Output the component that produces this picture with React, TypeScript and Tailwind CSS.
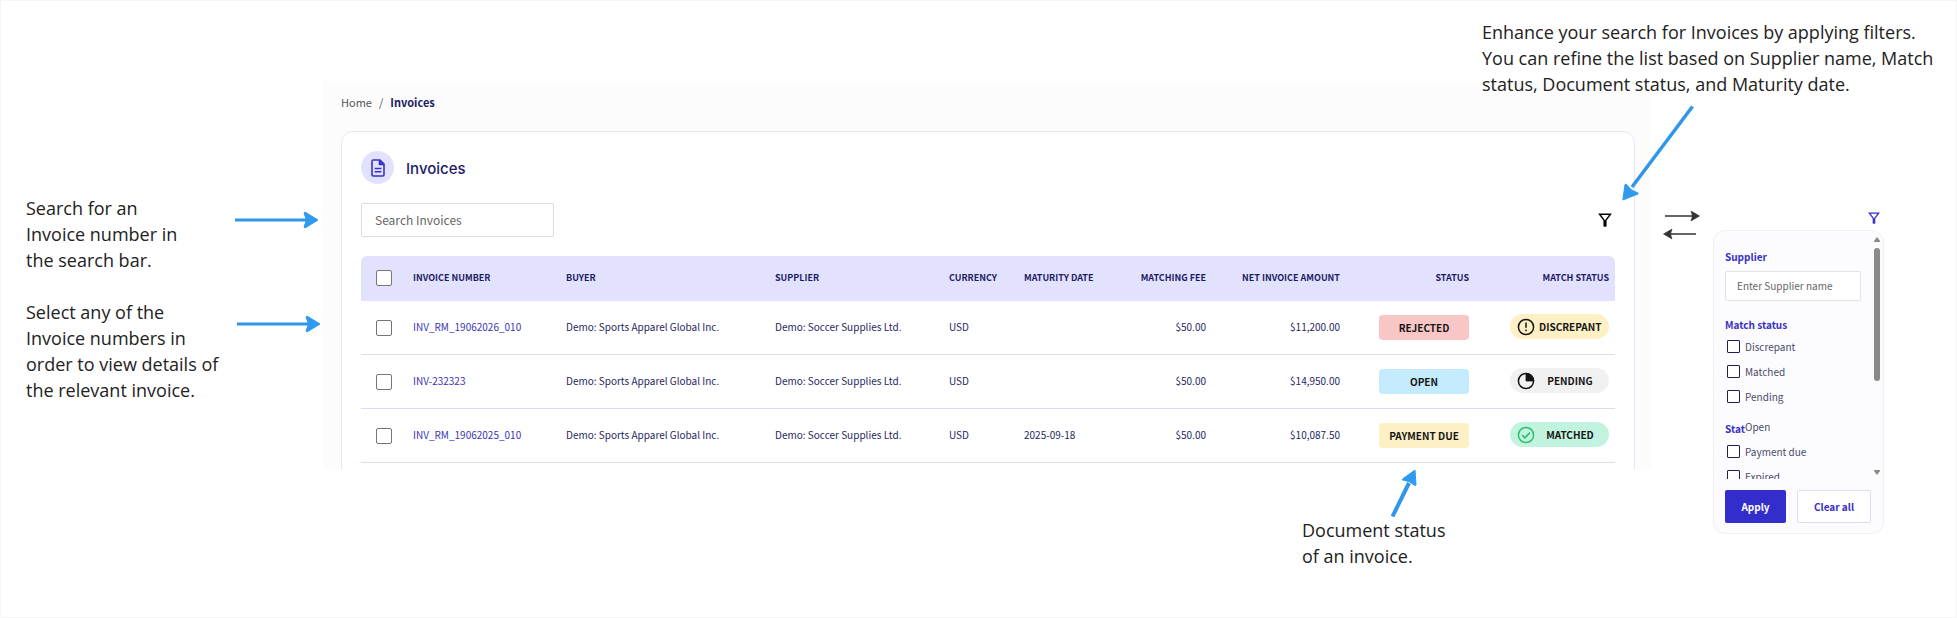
import type { ReactNode } from 'react'
import clsx from 'clsx'

type MatchStatus = 'DISCREPANT' | 'PENDING' | 'MATCHED'

interface Invoice {
  number: string
  buyer: string
  supplier: string
  currency: string
  maturityDate: string
  fee: string
  amount: string
  status: string
  statusClass: string
  match: MatchStatus
}

const invoices: Invoice[] = [
  {
    number: 'INV_RM_19062026_010',
    buyer: 'Demo: Sports Apparel Global Inc.',
    supplier: 'Demo: Soccer Supplies Ltd.',
    currency: 'USD',
    maturityDate: '',
    fee: '$50.00',
    amount: '$11,200.00',
    status: 'REJECTED',
    statusClass: 'bg-[#f9c6c6]',
    match: 'DISCREPANT',
  },
  {
    number: 'INV-232323',
    buyer: 'Demo: Sports Apparel Global Inc.',
    supplier: 'Demo: Soccer Supplies Ltd.',
    currency: 'USD',
    maturityDate: '',
    fee: '$50.00',
    amount: '$14,950.00',
    status: 'OPEN',
    statusClass: 'bg-[#c3eafd]',
    match: 'PENDING',
  },
  {
    number: 'INV_RM_19062025_010',
    buyer: 'Demo: Sports Apparel Global Inc.',
    supplier: 'Demo: Soccer Supplies Ltd.',
    currency: 'USD',
    maturityDate: '2025-09-18',
    fee: '$50.00',
    amount: '$10,087.50',
    status: 'PAYMENT DUE',
    statusClass: 'bg-[#fdf0c4]',
    match: 'MATCHED',
  },
]

const matchClass: Record<MatchStatus, string> = {
  DISCREPANT: 'bg-[#fdf0c4]',
  PENDING: 'bg-[#f1f1f1]',
  MATCHED: 'bg-[#c2f3df]',
}

function MatchIcon({ match }: { match: MatchStatus }) {
  const color = match === 'MATCHED' ? '#2fbf71' : '#151515'
  return (
    <svg width="18" height="18" viewBox="0 0 18 18" fill="none" stroke={color} className="shrink-0">
      <circle cx="9" cy="9" r="7.6" strokeWidth="1.5" />
      {match === 'DISCREPANT' && <path d="M9 4.6v5.2M9 11.6v1.7" strokeWidth="1.5" />}
      {match === 'PENDING' && <path d="M9 1.4A7.6 7.6 0 0 1 16.6 9H9z" fill={color} strokeWidth="0.8" />}
      {match === 'MATCHED' && <path d="M5.2 9.2l2.7 2.6 5-5.2" strokeWidth="1.6" />}
    </svg>
  )
}

function FunnelIcon({ size }: { size: number }) {
  return (
    <svg width={size} height={size} viewBox="0 0 14 14" fill="none" stroke="currentColor">
      <path d="M1.600 1.300h10.800L7.800 7.400v5.400H6.200V7.400z" strokeWidth="1.500" />
      <path d="M7 7.400v6" strokeWidth="2" />
    </svg>
  )
}

function RightArrow() {
  return (
    <svg width="84" height="18" viewBox="0 0 84 18" className="shrink-0">
      <path d="M0 9h72" stroke="#2f96ea" strokeWidth="3" />
      <path d="M83 9L70 17l-1-1 2.500-7L69 2l1-1z" fill="#2f9bf0" stroke="#2f9bf0" strokeLinejoin="round" />
    </svg>
  )
}

function Note({ children, className }: { children: ReactNode; className?: string }) {
  return (
    <p className={clsx("font-['Open_Sans',sans-serif] text-lg leading-[26px] whitespace-nowrap text-[#222]", className)}>
      {children}
    </p>
  )
}

function RowCheckbox({ label }: { label: string }) {
  return (
    <input
      type="checkbox"
      aria-label={label}
      className="ml-[15px] block size-4 appearance-none rounded-xs border border-[#767676] bg-white"
    />
  )
}

function InvoiceTable() {
  return (
    <table className="w-full table-fixed border-separate border-spacing-0 text-left text-[10px] text-[#27275f]">
      <colgroup>
        <col className="w-[52px]" />
        <col className="w-[153px]" />
        <col className="w-[209px]" />
        <col className="w-[174px]" />
        <col className="w-[75px]" />
        <col className="w-[100px]" />
        <col className="w-[82px]" />
        <col className="w-[134px]" />
        <col className="w-[129px]" />
        <col className="w-[146px]" />
      </colgroup>
      <thead>
        <tr className="h-[45px] whitespace-nowrap text-[9px] text-[#1d1b66] [&>th]:bg-[#e3e2fe] [&>th]:pb-px [&>th]:font-bold">
          <th className="rounded-tl-md">
            <RowCheckbox label="Select all invoices" />
          </th>
          <th>INVOICE NUMBER</th>
          <th>BUYER</th>
          <th>SUPPLIER</th>
          <th>CURRENCY</th>
          <th>MATURITY DATE</th>
          <th className="text-right">MATCHING FEE</th>
          <th className="text-right">NET INVOICE AMOUNT</th>
          <th className="text-right">STATUS</th>
          <th className="rounded-tr-md pr-1.5 text-right">MATCH STATUS</th>
        </tr>
      </thead>
      <tbody>
        {invoices.map((invoice) => (
          <tr key={invoice.number} className="h-[54px] whitespace-nowrap [&>td]:border-b [&>td]:border-[#dcdcf4]">
            <td>
              <RowCheckbox label={`Select ${invoice.number}`} />
            </td>
            <td className="pb-0.5">
              <a href="#invoice" className="text-[#3a35b8]">{invoice.number}</a>
            </td>
            <td className="pb-0.5">{invoice.buyer}</td>
            <td className="pb-0.5">{invoice.supplier}</td>
            <td className="pb-0.5">{invoice.currency}</td>
            <td className="pb-0.5">{invoice.maturityDate}</td>
            <td className="pb-0.5 text-right">{invoice.fee}</td>
            <td className="pb-0.5 text-right">{invoice.amount}</td>
            <td>
              <span
                className={clsx(
                  'ml-auto flex h-[25px] w-[90px] items-center justify-center rounded font-bold text-[#151515]',
                  invoice.statusClass,
                )}
              >
                {invoice.status}
              </span>
            </td>
            <td className="pr-1.5 pb-0.5">
              <span
                className={clsx(
                  'ml-auto flex h-[25px] w-[99px] items-center rounded-full pr-2 pl-[7px] font-bold text-[#151515]',
                  matchClass[invoice.match],
                )}
              >
                <MatchIcon match={invoice.match} />
                <span className="flex-1 pl-1 text-center">{invoice.match}</span>
              </span>
            </td>
          </tr>
        ))}
      </tbody>
    </table>
  )
}

function InvoicesPage() {
  return (
    <section className="h-[388px] overflow-hidden bg-[#fcfcfc] pr-4 pl-[18px] font-['Noto_Sans_CJK_SC',sans-serif]">
      <nav aria-label="Breadcrumb" className="flex h-[50px] items-center gap-[7px] pb-2 text-[11px] text-[#555]">
        <a href="#home">Home</a>
        <span>/</span>
        <span className="font-bold text-[#1d1b66]">Invoices</span>
      </nav>
      <div className="h-full rounded-t-xl border border-[#e6e6fa] bg-white pt-[19px] pr-[21px] pl-[19px]">
        <div className="flex items-center gap-3">
          <span className="flex size-[33px] items-center justify-center rounded-full bg-[#e3e2fe]">
            <svg width="14" height="18" viewBox="0 0 14 18" fill="none" stroke="#3a32c8" strokeWidth="1.6">
              <path d="M1 2.200Q1 1 2.200 1H9l4 4v10.800Q13 17 11.800 17H2.200Q1 17 1 15.800z" />
              <path d="M8.500 1v4.500H13" fill="#3a32c8" />
              <path d="M3.600 9.500h6.800M3.600 12.800h6.800" strokeWidth="1.4" />
            </svg>
          </span>
          <h1 className="pt-1 font-[Inter,sans-serif] text-[15px] font-medium text-[#1d1b66]">Invoices</h1>
        </div>
        <div className="mt-[19px] mb-[19px] flex items-center justify-between">
          <input
            type="text"
            aria-label="Search invoices"
            placeholder="Search Invoices"
            className="h-[34px] w-[193px] rounded-xs border border-[#dcdcdc] bg-white px-[13px] pb-0.5 text-xs placeholder:text-[#666]"
          />
          <button type="button" aria-label="Filter invoices" className="mr-px text-black">
            <FunnelIcon size={14} />
          </button>
        </div>
        <InvoiceTable />
      </div>
    </section>
  )
}

function FilterOption({ label }: { label: string }) {
  return (
    <label className="flex h-[25px] items-center gap-[5px] pl-0.5 text-[#4b4a68]">
      <input type="checkbox" className="size-[13px] appearance-none rounded-[1px] border border-[#241a5e] bg-white" />
      {label}
    </label>
  )
}

function FilterPanel() {
  return (
    <form className="h-[304px] w-[171px] rounded-xl border border-[#f0f0f3] bg-[#fcfcfe] pl-[11px] font-['Noto_Sans_CJK_SC',sans-serif] text-[10px]">
      <div className="flex h-[248px]">
        <div className="w-[136px] overflow-hidden pt-[18px]">
          <label htmlFor="supplier" className="block leading-4 font-bold text-[#3730c4]">
            Supplier
          </label>
          <input
            id="supplier"
            type="text"
            placeholder="Enter Supplier name"
            className="mt-1.5 h-[30px] w-full rounded-xs border border-[#e2e2e4] bg-white px-[11px] pb-0.5 placeholder:text-[#666]"
          />
          <fieldset className="mt-4">
            <legend className="pb-px leading-4 font-bold text-[#3730c4]">Match status</legend>
            <FilterOption label="Discrepant" />
            <FilterOption label="Matched" />
            <FilterOption label="Pending" />
          </fieldset>
          <fieldset className="mt-2">
            <legend className="mb-1 flex h-[18px] items-center text-[#4b4a68]">
              <span className="w-5 pt-1 font-bold text-[#3730c4]">Stat</span>
              Open
            </legend>
            <FilterOption label="Payment due" />
            <FilterOption label="Expired" />
          </fieldset>
        </div>
        <div className="ml-3 flex w-2 flex-col items-center pt-1.5 pb-1">
          <svg width="6" height="5" viewBox="0 0 6 5" fill="#8a8a8a">
            <path d="M3 0l3 4v1H0V4z" />
          </svg>
          <span className="mt-1.5 h-[133px] w-1.5 rounded-full bg-[#8a8a8a]" />
          <svg width="6" height="5" viewBox="0 0 6 5" fill="#8a8a8a" className="mt-auto">
            <path d="M0 0h6v1L3 5 0 1z" />
          </svg>
        </div>
      </div>
      <div className="mt-[11px] flex gap-[11px] font-bold">
        <button type="button" className="h-[33px] w-[61px] rounded-xs bg-[#322dcb] text-white">
          Apply
        </button>
        <button type="button" className="h-[33px] w-[74px] rounded-xs border border-[#dedcf8] bg-white text-[#3730c4]">
          Clear all
        </button>
      </div>
    </form>
  )
}

export default function App() {
  return (
    <main className="relative flex min-h-screen border border-[#f5f5f5] bg-white">
      <aside className="flex w-[322px] shrink-0 flex-col gap-[26px] pt-[194px] pl-[25px]">
        <div className="flex items-start">
          <Note className="w-[209px]">
            Search for an
            <br />
            Invoice number in
            <br />
            the search bar.
          </Note>
          <div className="pt-4">
            <RightArrow />
          </div>
        </div>
        <div className="flex items-start">
          <Note className="w-[211px]">
            Select any of the
            <br />
            Invoice numbers in
            <br />
            order to view details of
            <br />
            the relevant invoice.
          </Note>
          <div className="pt-4">
            <RightArrow />
          </div>
        </div>
      </aside>

      <div className="flex min-w-0 flex-1 flex-col pt-20">
        <InvoicesPage />
        <div className="w-[349px] self-end">
          <svg width="26" height="48" viewBox="0 0 26 48" className="ml-[89px]">
            <path d="M1.500 47.500L18 14" stroke="#2f96ea" strokeWidth="4" />
            <path d="M24 1l1 15-1 .5-6-4-6.500-1.500v-1z" fill="#2f9bf0" stroke="#2f9bf0" strokeLinejoin="round" />
          </svg>
          <Note>
            Document status
            <br />
            of an invoice.
          </Note>
        </div>
      </div>

      <aside className="flex w-[305px] shrink-0 items-start gap-3 pt-[210px] pl-3">
        <svg width="38" height="30" viewBox="0 0 38 30" fill="#333" stroke="#333">
          <path d="M2 5h28M6 23h27" strokeWidth="1.500" />
          <path d="M36.500 5L28 10l1.500-5L28 0zM.5 23L9 18l-1.500 5L9 28z" strokeWidth="0.600" />
        </svg>
        <div className="flex flex-col items-end gap-1.5">
          <button type="button" aria-label="Toggle filters" className="mr-1 h-[13px] text-[#3730c4]">
            <FunnelIcon size={12} />
          </button>
          <FilterPanel />
        </div>
      </aside>

      {/* Callout that lies over the page's top right corner */}
      <div className="absolute top-[18px] right-0 w-[474px]">
        <Note>
          Enhance your search for Invoices by applying filters.
          <br />
          You can refine the list based on Supplier name, Match
          <br />
          status, Document status, and Maturity date.
        </Note>
        <svg width="72" height="96" viewBox="0 0 72 96" className="mt-2 ml-[140px]">
          <path d="M70.500 1.500L10 82" stroke="#2f96ea" strokeWidth="3.500" />
          <path d="M.800 95L3 79.500l1-.5 5.500 6 6.500 3v1z" fill="#2f9bf0" stroke="#2f9bf0" strokeLinejoin="round" />
        </svg>
      </div>
    </main>
  )
}
